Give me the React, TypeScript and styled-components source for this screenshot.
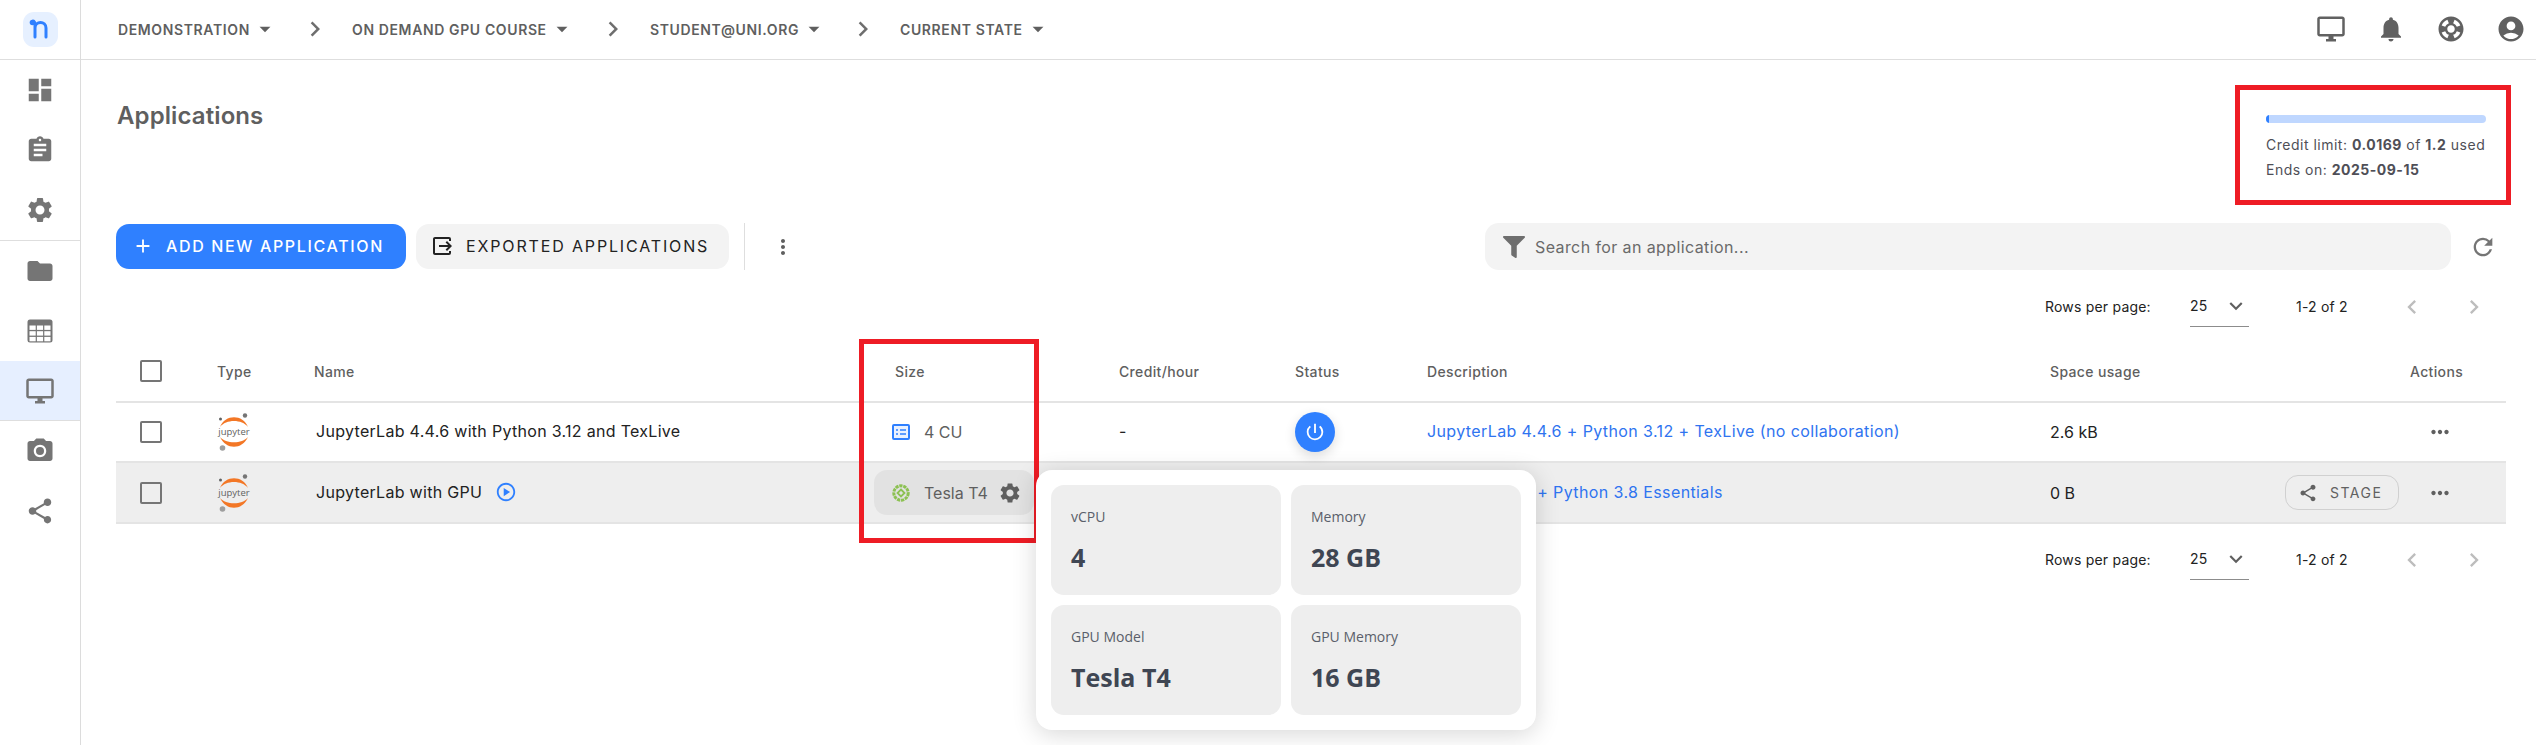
import React from 'react'
import styled, { createGlobalStyle } from 'styled-components'
import {
  MdDashboard,
  MdAssignment,
  MdSettings,
  MdFolder,
  MdOutlineDesktopWindows,
  MdPhotoCamera,
  MdShare,
  MdNotifications,
  MdSupport,
  MdAccountCircle,
  MdArrowDropDown,
  MdChevronRight,
  MdChevronLeft,
  MdAdd,
  MdOutput,
  MdMoreVert,
  MdMoreHoriz,
  MdRefresh,
  MdExpandMore,
  MdPowerSettingsNew,
  MdOutlinePlayCircle,
} from 'react-icons/md'
import { FaFilter } from 'react-icons/fa'

const GlobalStyle = createGlobalStyle`
  html, body {
    margin: 0;
    height: 100%;
    background: #fff;
    overflow: hidden;
  }
  * { box-sizing: border-box; }
  body {
    font-family: 'Inter', 'Noto Sans', sans-serif;
    color: #222;
  }
`

const Page = styled.div`
  display: flex;
  width: 2536px;
  height: 745px;
  overflow: hidden;
`

const Sidebar = styled.nav`
  width: 81px;
  flex: none;
  border-right: 1px solid #dcdcdc;
  display: flex;
  flex-direction: column;
`

const LogoCell = styled.div`
  height: 60px;
  border-bottom: 1px solid #dedede;
  display: flex;
  align-items: center;
  justify-content: center;
`

const LogoBadge = styled.div`
  width: 35px;
  height: 35px;
  margin-top: -1px;
  border-radius: 11px;
  background: #e6f0ff;
  display: flex;
  align-items: center;
  justify-content: center;
`

const NavGroup = styled.div<{ $divided?: boolean }>`
  display: flex;
  flex-direction: column;
  border-bottom: ${({ $divided }) => ($divided ? '1px solid #dedede' : 'none')};
`

const NavItem = styled.div<{ $active?: boolean }>`
  height: 60px;
  display: flex;
  align-items: center;
  justify-content: center;
  color: #757575;
  font-size: 30px;
  background: ${({ $active }) => ($active ? '#e6efff' : 'transparent')};
  border-bottom: ${({ $active }) => ($active ? '1px solid #dedede' : 'none')};
`

const Main = styled.main`
  flex: 1;
  min-width: 0;
  display: flex;
  flex-direction: column;
`

const TopBar = styled.header`
  height: 60px;
  flex: none;
  border-bottom: 1px solid #dedede;
  display: flex;
  align-items: center;
  padding: 0 10px 1px 37px;
`

const Crumb = styled.div<{ $w: number }>`
  width: ${({ $w }) => $w}px;
  display: flex;
  align-items: center;
  font-size: 14px;
  font-weight: 600;
  letter-spacing: 0.62px;
  color: #5f5f5f;
  white-space: nowrap;
  svg {
    font-size: 26px;
    margin-left: 2px;
    flex: none;
  }
`

const CrumbArrow = styled.div`
  width: 52px;
  display: flex;
  color: #6e6e6e;
  font-size: 30px;
`

const TopIcons = styled.div`
  margin-left: auto;
  display: flex;
  gap: 30px;
  color: #616161;
  font-size: 30px;
  svg { display: block; }
`

const Content = styled.div`
  flex: 1;
  padding: 25px 30px 0 35px;
  display: flex;
  flex-direction: column;
`

const HeaderRow = styled.div`
  display: flex;
  justify-content: space-between;
  height: 120px;
  margin-right: -5px;
`

const Title = styled.h1`
  margin: 15px 0 0 1px;
  font-size: 24px;
  line-height: 32px;
  font-weight: 600;
  letter-spacing: 0.1px;
  color: #5f5f5f;
`

const CreditBox = styled.div`
  width: 276px;
  height: 120px;
  border: 5px solid #ee1c25;
  padding: 25px 20px 0 26px;
`

const Progress = styled.div`
  height: 8px;
  border-radius: 4px;
  background: #bfd7ff;
  overflow: hidden;
`

const ProgressFill = styled.div`
  height: 100%;
  background: #2f80ff;
`

const CreditLine = styled.div`
  margin-top: 13px;
  font-size: 14px;
  line-height: 17px;
  letter-spacing: 0.5px;
  color: #4f4f57;
  white-space: nowrap;
  b {
    font-weight: 700;
  }
  & + & {
    margin-top: 8px;
  }
`

const Toolbar = styled.div`
  height: 47px;
  margin-top: 18px;
  display: flex;
  align-items: center;
`

const PrimaryButton = styled.button`
  width: 290px;
  height: 45px;
  border: 0;
  border-radius: 13px;
  background: #2f80ff;
  color: #fff;
  font: 500 16px 'Inter', sans-serif;
  letter-spacing: 1.65px;
  display: flex;
  align-items: center;
  padding: 0 0 2px 16px;
  gap: 12px;
  white-space: nowrap;
  svg { font-size: 22px; flex: none; }
`

const SecondaryButton = styled.button`
  width: 313px;
  height: 45px;
  margin-left: 10px;
  border: 0;
  border-radius: 13px;
  background: #f3f3f3;
  color: #222;
  font: 400 16px 'Inter', sans-serif;
  letter-spacing: 1.85px;
  display: flex;
  align-items: center;
  padding: 0 0 2px 14px;
  gap: 12px;
  white-space: nowrap;
  svg { font-size: 24px; flex: none; }
`

const VDivider = styled.div`
  width: 1px;
  height: 47px;
  margin: 0 26px 0 15px;
  background: #dedede;
`

const MoreButton = styled.div`
  display: flex;
  color: #5f5f5f;
  font-size: 24px;
`

const SearchBox = styled.div`
  margin-left: auto;
  width: 966px;
  height: 47px;
  border-radius: 14px;
  background: #f3f3f3;
  display: flex;
  align-items: center;
  padding-left: 18px;
  gap: 10px;
  color: #6a6a6a;
  font-size: 16px;
  letter-spacing: 0.4px;
  svg { font-size: 22px; color: #6e6e6e; }
`

const RefreshButton = styled.div`
  display: flex;
  margin: 0 9px 0 18px;
  font-size: 28px;
  color: #757575;
`

const Pagination = styled.div<{ $top: number }>`
  height: 40px;
  margin-top: ${({ $top }) => $top}px;
  display: flex;
  align-items: center;
  justify-content: flex-end;
  padding-right: 18px;
  font-size: 14px;
  letter-spacing: 0.2px;
  color: #222;
`

const RowsLabel = styled.span`
  width: 145px;
  padding-bottom: 2px;
`

const RowsSelect = styled.div`
  width: 59px;
  height: 40px;
  padding-bottom: 2px;
  border-bottom: 1px solid #8c8c8c;
  display: flex;
  align-items: center;
  justify-content: space-between;
  svg { font-size: 26px; color: #5f5f5f; }
`

const RangeText = styled.span`
  margin-left: 47px;
  width: 52px;
  padding-bottom: 2px;
  white-space: nowrap;
`

const PageArrows = styled.div`
  margin-left: 50px;
  display: flex;
  gap: 34px;
  font-size: 28px;
  color: #bdbdbd;
`

const Table = styled.div`
  position: relative;
  margin-top: 16px;
`

const columns = '101px 97px 581px 224px 176px 132px 623px 360px 1fr'

const HeadRow = styled.div`
  display: grid;
  grid-template-columns: ${columns};
  height: 60px;
  align-items: center;
  padding-bottom: 2px;
  border-bottom: 2px solid #e4e4e4;
  font-size: 14px;
  font-weight: 500;
  letter-spacing: 0.35px;
  color: #5f5f5f;
`

const Row = styled.div<{ $hover?: boolean }>`
  display: grid;
  grid-template-columns: ${columns};
  height: ${({ $hover }) => ($hover ? '61px' : '60px')};
  align-items: center;
  border-bottom: 2px solid #e4e4e4;
  background: ${({ $hover }) => ($hover ? '#eeeeee' : 'transparent')};
  font-size: 16px;
  color: #222;
`

const CheckCell = styled.div`
  padding-left: 24px;
`

const Checkbox = styled.div`
  width: 22px;
  height: 22px;
  border: 2px solid #757575;
  border-radius: 2px;
`

const NameCell = styled.div`
  padding: 0 0 2px 2px;
  display: flex;
  align-items: center;
  gap: 13px;
  font-size: 16px;
  letter-spacing: 0.3px;
  svg { font-size: 22px; color: #2f80ff; }
`

const SizeCell = styled.div`
  display: flex;
  align-items: center;
  margin-left: -4px;
  gap: 13px;
  font-size: 16px;
  color: #5f5f5f;
`

const SizeChip = styled.div`
  width: 160px;
  height: 45px;
  margin-left: -17px;
  padding-left: 17px;
  border-radius: 13px;
  background: #e2e2e2;
  display: flex;
  align-items: center;
  gap: 13px;
  font-size: 16px;
  color: #5f5f5f;
`

const GearIcon = styled.span`
  display: flex;
  margin-left: -3px;
  font-size: 24px;
  color: #5f5f5f;
`

const PowerButton = styled.button`
  width: 40px;
  height: 40px;
  border: 0;
  padding: 0;
  border-radius: 50%;
  background: #2f80ff;
  color: #fff;
  display: flex;
  align-items: center;
  justify-content: center;
  font-size: 22px;
  box-shadow: 0 4px 12px rgba(0, 0, 0, 0.14);
`

const DescLink = styled.span`
  padding-bottom: 2px;
  color: #2f74f0;
  font-size: 16px;
  letter-spacing: 0.39px;
  white-space: nowrap;
`

const DashText = styled.span`
  padding-bottom: 2px;
`

const SpaceCell = styled.div`
  display: flex;
  align-items: center;
  justify-content: space-between;
  padding-right: 11px;
  font-size: 16px;
`

const StageButton = styled.div`
  width: 114px;
  height: 35px;
  border: 1px solid #d0d0d0;
  border-radius: 13px;
  display: flex;
  align-items: center;
  padding-left: 12px;
  gap: 12px;
  font-size: 14px;
  letter-spacing: 1.5px;
  color: #616161;
  svg { font-size: 20px; }
`

const ActionCell = styled.div`
  display: flex;
  padding-left: 17px;
  font-size: 26px;
  color: #5f5f5f;
`

const RedMark = styled.div`
  position: absolute;
  left: 743px;
  top: -4px;
  width: 180px;
  height: 204px;
  border: 5px solid #ee1c25;
  pointer-events: none;
`

const Popover = styled.div`
  position: absolute;
  left: 920px;
  top: 127px;
  width: 500px;
  height: 260px;
  padding: 15px;
  background: #fff;
  border-radius: 16px;
  box-shadow: 0 4px 24px rgba(0, 0, 0, 0.16);
  display: grid;
  grid-template-columns: 230px 230px;
  grid-template-rows: 110px 110px;
  gap: 10px;
`

const SpecCard = styled.div`
  background: #eeeeee;
  border-radius: 13px;
  padding: 22px 20px 0;
  font-family: 'Open Sans', 'Noto Sans', sans-serif;
`

const SpecLabel = styled.div`
  font-size: 14px;
  line-height: 20px;
  color: #5a5f6a;
`

const SpecValue = styled.div`
  margin-top: 15px;
  font-size: 25px;
  line-height: 30px;
  font-weight: 700;
  color: #3f4653;
`

const NLogo = () => (
  <svg width="24" height="24" viewBox="0 0 24 24" fill="none">
    <path
      d="M7 8 V20 M7 11 C7 3.5 18 3.5 18 11 V20"
      stroke="#2f80ff"
      strokeWidth="3"
      strokeLinecap="round"
    />
    <circle cx="4.5" cy="5.5" r="2.8" fill="#2f80ff" />
    <path d="M4.5 4 C6 4 7 5.5 7 8" stroke="#2f80ff" strokeWidth="3" />
  </svg>
)

const TableIcon = () => (
  <svg width="26" height="24" viewBox="0 0 26 24">
    <rect x="0.5" y="0.5" width="25" height="23" rx="2.5" fill="#757575" />
    {[2.5, 9.9, 17.3].map(x =>
      [6.5, 12.2, 17.9].map(y => (
        <rect key={`${x}-${y}`} x={x} y={y} width="6.2" height="4.4" fill="#fff" />
      ))
    )}
  </svg>
)

const JupyterLogo = () => (
  <svg width="34" height="38" viewBox="0 0 34 38">
    <path d="M3 14 C8 1 26 1 31 14 C25 6 9 6 3 14 Z" fill="#f37726" />
    <path d="M3 24 C9 37 25 37 31 24 C25 31 9 31 3 24 Z" fill="#f37726" />
    <text
      x="17"
      y="22"
      textAnchor="middle"
      fontFamily="Open Sans, sans-serif"
      fontSize="9.5"
      fill="#616161"
    >
      jupyter
    </text>
    <circle cx="28" cy="2.5" r="2.2" fill="#757575" />
    <circle cx="3.5" cy="6" r="1.5" fill="#616161" />
    <circle cx="5.5" cy="35" r="2.8" fill="#9e9e9e" />
  </svg>
)

const CpuIcon = () => (
  <svg width="20" height="20" viewBox="0 0 20 20" fill="none">
    <rect x="2" y="3" width="16" height="14" rx="1" fill="#e9f1ff" stroke="#2f80ff" strokeWidth="2" />
    <path d="M5 8 H7 M9 8 H15 M5 12 H7 M9 12 H15" stroke="#2f80ff" strokeWidth="1.6" />
  </svg>
)

const GpuIcon = () => (
  <svg width="20" height="20" viewBox="0 0 20 20" fill="none">
    <circle cx="10" cy="10" r="7.2" stroke="#8cc152" strokeWidth="3" strokeDasharray="3.2 0.8" />
    <path d="M10 6.5 L13.5 10 L10 13.5 L6.5 10 Z" stroke="#8cc152" strokeWidth="1.8" />
  </svg>
)

const Pager = ({ top }: { top: number }) => (
  <Pagination $top={top}>
    <RowsLabel>Rows per page:</RowsLabel>
    <RowsSelect>
      25
      <MdExpandMore />
    </RowsSelect>
    <RangeText>1-2 of 2</RangeText>
    <PageArrows>
      <MdChevronLeft />
      <MdChevronRight />
    </PageArrows>
  </Pagination>
)

const specs = [
  { label: 'vCPU', value: '4' },
  { label: 'Memory', value: '28 GB' },
  { label: 'GPU Model', value: 'Tesla T4' },
  { label: 'GPU Memory', value: '16 GB' },
]

const App = () => {
  return (
    <Page>
      <GlobalStyle />
      <Sidebar>
        <LogoCell>
          <LogoBadge>
            <NLogo />
          </LogoBadge>
        </LogoCell>
        <NavGroup $divided>
          <NavItem><MdDashboard /></NavItem>
          <NavItem><MdAssignment /></NavItem>
          <NavItem><MdSettings /></NavItem>
        </NavGroup>
        <NavGroup>
          <NavItem><MdFolder /></NavItem>
          <NavItem><TableIcon /></NavItem>
          <NavItem $active><MdOutlineDesktopWindows /></NavItem>
          <NavItem><MdPhotoCamera /></NavItem>
          <NavItem><MdShare /></NavItem>
        </NavGroup>
      </Sidebar>
      <Main>
        <TopBar>
          <Crumb $w={182}>DEMONSTRATION <MdArrowDropDown /></Crumb>
          <CrumbArrow><MdChevronRight /></CrumbArrow>
          <Crumb $w={246}>ON DEMAND GPU COURSE <MdArrowDropDown /></Crumb>
          <CrumbArrow><MdChevronRight /></CrumbArrow>
          <Crumb $w={198}>STUDENT@UNI.ORG <MdArrowDropDown /></Crumb>
          <CrumbArrow><MdChevronRight /></CrumbArrow>
          <Crumb $w={140}>CURRENT STATE <MdArrowDropDown /></Crumb>
          <TopIcons>
            <MdOutlineDesktopWindows />
            <MdNotifications />
            <MdSupport />
            <MdAccountCircle />
          </TopIcons>
        </TopBar>
        <Content>
          <HeaderRow>
            <Title>Applications</Title>
            <CreditBox>
              <Progress>
                <ProgressFill style={{ width: `${(0.0169 / 1.2) * 100}%` }} />
              </Progress>
              <CreditLine>Credit limit: <b>0.0169</b> of <b>1.2</b> used</CreditLine>
              <CreditLine>Ends on: <b>2025-09-15</b></CreditLine>
            </CreditBox>
          </HeaderRow>
          <Toolbar>
            <PrimaryButton><MdAdd />ADD NEW APPLICATION</PrimaryButton>
            <SecondaryButton><MdOutput />EXPORTED APPLICATIONS</SecondaryButton>
            <VDivider />
            <MoreButton><MdMoreVert /></MoreButton>
            <SearchBox><FaFilter />Search for an application...</SearchBox>
            <RefreshButton><MdRefresh /></RefreshButton>
          </Toolbar>
          <Pager top={17} />
          <Table>
            <HeadRow>
              <CheckCell><Checkbox /></CheckCell>
              <span>Type</span>
              <span>Name</span>
              <span>Size</span>
              <span>Credit/hour</span>
              <span>Status</span>
              <span>Description</span>
              <span>Space usage</span>
              <span>Actions</span>
            </HeadRow>
            <Row>
              <CheckCell><Checkbox /></CheckCell>
              <JupyterLogo />
              <NameCell>JupyterLab 4.4.6 with Python 3.12 and TexLive</NameCell>
              <SizeCell><CpuIcon />4 CU</SizeCell>
              <DashText>-</DashText>
              <PowerButton><MdPowerSettingsNew /></PowerButton>
              <DescLink>JupyterLab 4.4.6 + Python 3.12 + TexLive (no collaboration)</DescLink>
              <SpaceCell>2.6 kB</SpaceCell>
              <ActionCell><MdMoreHoriz /></ActionCell>
            </Row>
            <Row $hover>
              <CheckCell><Checkbox /></CheckCell>
              <JupyterLogo />
              <NameCell>JupyterLab with GPU <MdOutlinePlayCircle /></NameCell>
              <SizeCell>
                <SizeChip><GpuIcon />Tesla T4<GearIcon><MdSettings /></GearIcon></SizeChip>
              </SizeCell>
              <span />
              <span />
              <DescLink>JupyterLab 4 + Python 3.8 Essentials</DescLink>
              <SpaceCell>
                0 B
                <StageButton><MdShare />STAGE</StageButton>
              </SpaceCell>
              <ActionCell><MdMoreHoriz /></ActionCell>
            </Row>
            <RedMark />
            <Popover>
              {specs.map(spec => (
                <SpecCard key={spec.label}>
                  <SpecLabel>{spec.label}</SpecLabel>
                  <SpecValue>{spec.value}</SpecValue>
                </SpecCard>
              ))}
            </Popover>
          </Table>
          <Pager top={16} />
        </Content>
      </Main>
    </Page>
  )
}

export default App
